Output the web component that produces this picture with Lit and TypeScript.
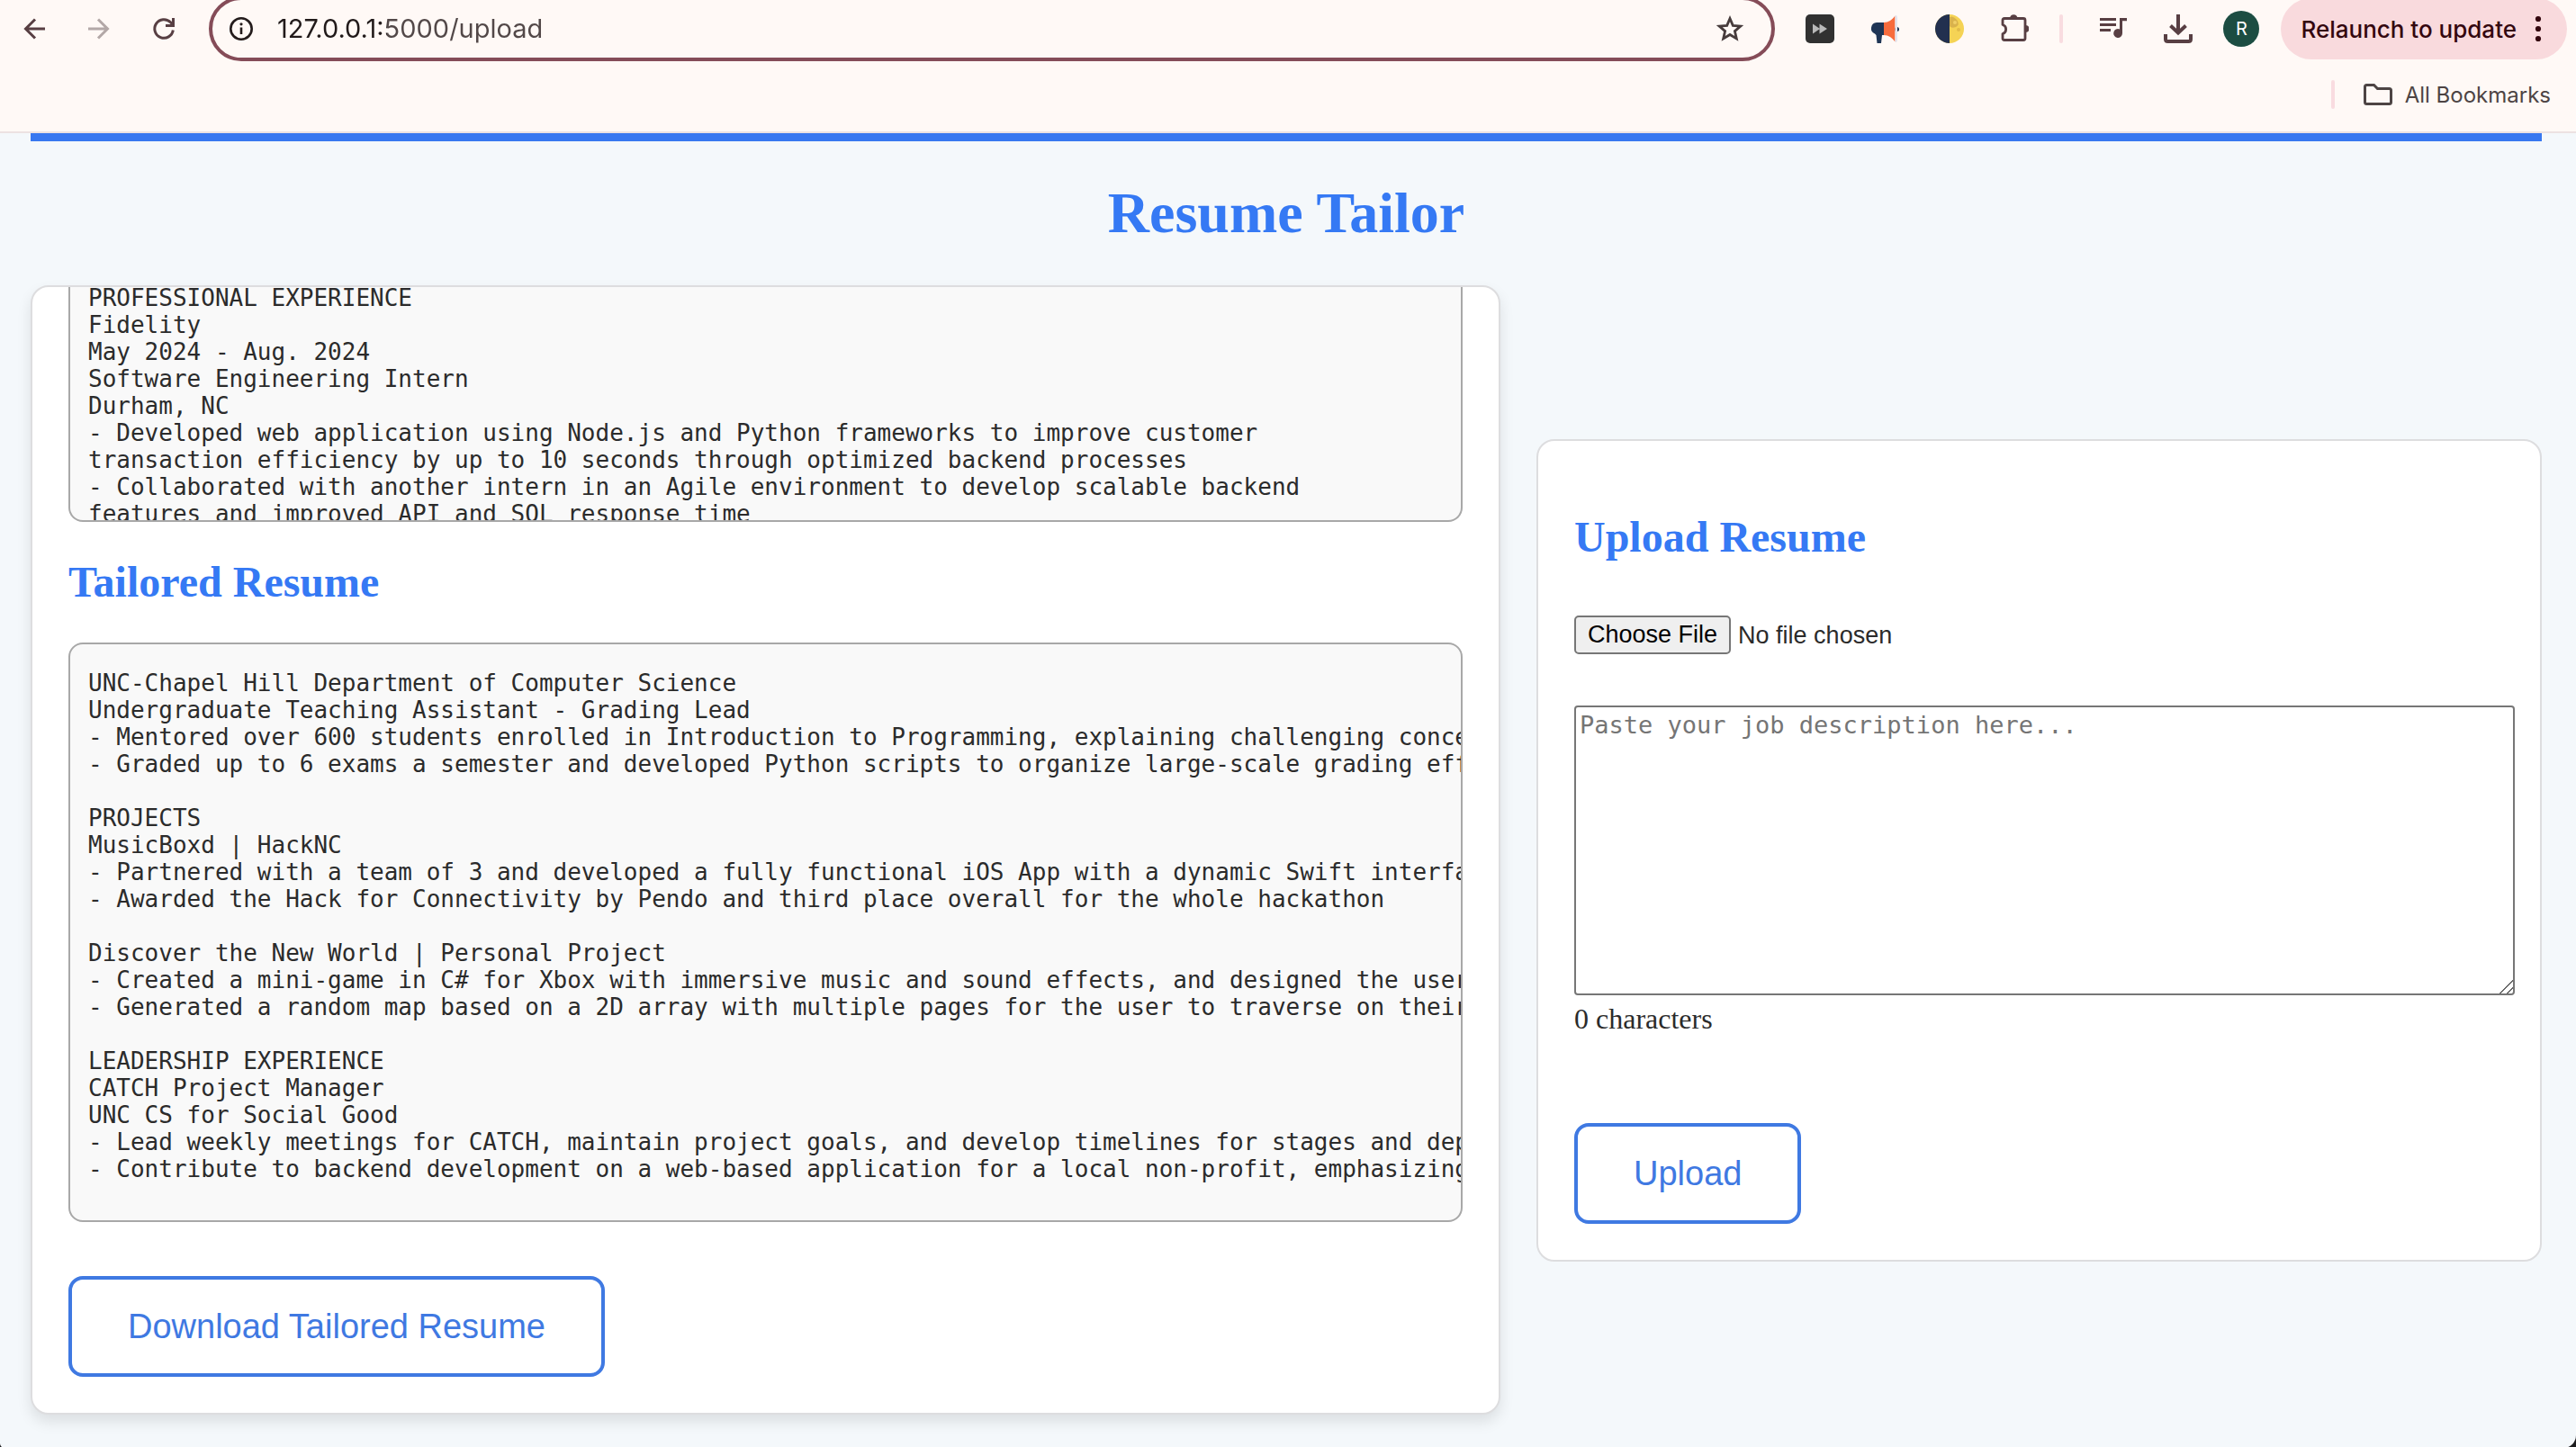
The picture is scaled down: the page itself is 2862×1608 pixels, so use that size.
import { LitElement, html, css } from "lit";
import { customElement, state } from "lit/decorators.js";

const ORIGINAL_LINES = [
  "PROFESSIONAL EXPERIENCE",
  "Fidelity",
  "May 2024 - Aug. 2024",
  "Software Engineering Intern",
  "Durham, NC",
  "- Developed web application using Node.js and Python frameworks to improve customer",
  "transaction efficiency by up to 10 seconds through optimized backend processes",
  "- Collaborated with another intern in an Agile environment to develop scalable backend",
  "features and improved API and SQL response time",
].join("\n");

const TAILORED_LINES = [
  "UNC-Chapel Hill Department of Computer Science",
  "Undergraduate Teaching Assistant - Grading Lead",
  "- Mentored over 600 students enrolled in Introduction to Programming, explaining challenging conce",
  "- Graded up to 6 exams a semester and developed Python scripts to organize large-scale grading eff",
  "",
  "PROJECTS",
  "MusicBoxd | HackNC",
  "- Partnered with a team of 3 and developed a fully functional iOS App with a dynamic Swift interfa",
  "- Awarded the Hack for Connectivity by Pendo and third place overall for the whole hackathon",
  "",
  "Discover the New World | Personal Project",
  "- Created a mini-game in C# for Xbox with immersive music and sound effects, and designed the user",
  "- Generated a random map based on a 2D array with multiple pages for the user to traverse on their",
  "",
  "LEADERSHIP EXPERIENCE",
  "CATCH Project Manager",
  "UNC CS for Social Good",
  "- Lead weekly meetings for CATCH, maintain project goals, and develop timelines for stages and dep",
  "- Contribute to backend development on a web-based application for a local non-profit, emphasizing",
].join("\n");

@customElement("browser-bar")
export class BrowserBar extends LitElement {
  static styles = css`
    :host {
      display: block;
      overflow: hidden;
      background: #fff9f6;
      border-bottom: 2px solid #ece2e2;
      font-family: Inter, "Liberation Sans", sans-serif;
      color: #583f43;
    }
    button {
      display: flex;
      padding: 0;
      border: 0;
      background: none;
      color: inherit;
      font: inherit;
    }
    svg {
      display: block;
      flex: none;
    }
    .toolbar {
      display: flex;
      align-items: center;
      height: 64px;
      gap: 34px;
      padding: 0 10px 0 22px;
    }
    .group {
      display: flex;
      align-items: center;
      gap: 40px;
    }
    .muted {
      color: #b3a8a7;
    }
    .omnibox {
      box-sizing: border-box;
      flex: 1;
      min-width: 0;
      display: flex;
      align-items: center;
      height: 72px;
      padding: 0 30px 0 16px;
      border: 4px solid #854c58;
      border-radius: 36px;
      color: #473c3c;
    }
    .info {
      color: #241c1c;
    }
    .url {
      flex: 1;
      min-width: 0;
      margin: 0 24px;
      padding: 0;
      border: 0;
      outline: 0;
      font: 29px/40px Inter, "Liberation Sans", sans-serif;
      color: transparent;
      background: linear-gradient(90deg, #211a1a 122px, #524848 122px);
      -webkit-background-clip: text;
      background-clip: text;
    }
    .divider {
      width: 4px;
      height: 32px;
      border-radius: 2px;
      background: #f9dce0;
    }
    .avatar {
      align-items: center;
      justify-content: center;
      width: 40px;
      height: 40px;
      border-radius: 50%;
      background: #1c4d42;
      color: #fff;
      font-size: 20px;
    }
    .profile {
      display: flex;
      align-items: center;
      gap: 24px;
    }
    .relaunch {
      align-items: center;
      gap: 20px;
      height: 68px;
      padding: 0 28px 0 22px;
      border-radius: 34px;
      background: #f9dadd;
      color: #34070f;
      font-size: 26px;
      font-weight: 450;
      white-space: nowrap;
    }
    .bookmarks {
      display: flex;
      align-items: center;
      justify-content: flex-end;
      height: 82px;
      gap: 32px;
      padding-right: 28px;
    }
    .folder {
      align-items: center;
      gap: 14px;
      color: #4d4444;
      font-size: 24px;
    }
  `;

  render() {
    return html`
      <div class="toolbar">
        <div class="group">
          <button aria-label="Back">
            <svg width="32" height="32" viewBox="0 0 32 32" fill="none" stroke="currentColor" stroke-width="3">
              <path d="M28 16H7M17 5.5L6.500 16L17 26.500" />
            </svg>
          </button>
          <button class="muted" aria-label="Forward">
            <svg width="32" height="32" viewBox="0 0 32 32" fill="none" stroke="currentColor" stroke-width="3">
              <path d="M4 16H25M15 5.500L25.500 16L15 26.500" />
            </svg>
          </button>
          <button aria-label="Reload">
            <svg width="32" height="32" viewBox="0 0 32 32" fill="none" stroke="currentColor" stroke-width="3">
              <path d="M26.300 17.500A10.300 10.300 0 1 1 23.500 8.800L26 11.500" />
              <path d="M26.500 4V12.500H18" />
            </svg>
          </button>
        </div>
        <div class="omnibox">
          <button class="info" aria-label="Site information">
            <svg width="32" height="32" viewBox="0 0 32 32" fill="none" stroke="currentColor" stroke-width="2.600">
              <circle cx="16" cy="16" r="11.700" />
              <path d="M16 14.500V22" />
              <circle cx="16" cy="10.800" r="1.600" fill="currentColor" stroke="none" />
            </svg>
          </button>
          <input class="url" type="text" aria-label="Address" value="127.0.0.1:5000/upload" />
          <button aria-label="Bookmark this tab">
            <svg width="32" height="32" viewBox="0 0 32 32" fill="none" stroke="currentColor" stroke-width="2.800">
              <path d="M16 4.500L19.300 12.300L27.800 13L21.400 18.600L23.300 26.900L16 22.500L8.700 26.900L10.600 18.600L4.200 13L12.700 12.300Z" />
            </svg>
          </button>
        </div>
        <div class="group">
          <button aria-label="Playback speed extension">
            <svg width="32" height="32" viewBox="0 0 32 32">
              <rect width="32" height="32" rx="5" fill="#313131" />
              <path d="M8 10.500L16 16L8 21.500ZM15.500 10.500L24 16L15.500 21.500Z" fill="#b9b9b9" />
            </svg>
          </button>
          <button aria-label="Megaphone extension">
            <svg width="32" height="32" viewBox="0 0 32 32">
              <circle cx="29.500" cy="16.500" r="2.500" fill="#1f3555" />
              <path d="M15 9H7A6.500 6.500 0 0 0 5 21.500L6.500 23L7.500 32H12L13 23H15Z" fill="#1f3555" />
              <path d="M15 9C20 9 24.500 6 27.500 1.500V30.500C24.500 26 20 23 15 23Z" fill="#f76b3c" />
              <path d="M27.500 1.500Q30 0 30 4V28Q30 32 27.500 30.500Z" fill="#e2e4ee" />
            </svg>
          </button>
          <button aria-label="Dark mode extension">
            <svg width="32" height="32" viewBox="0 0 32 32">
              <circle cx="16" cy="16" r="16" fill="#f5d355" />
              <path d="M16 0A16 16 0 0 0 16 32Z" fill="#22304f" />
              <path d="M16 3Q20 1 24 6Q28 11 23 14Q18 16 16 13Z" fill="#d9b24c" />
              <circle cx="22" cy="9" r="2" fill="#f0cf68" />
              <circle cx="26" cy="17" r="2" fill="#e2bb4a" />
            </svg>
          </button>
          <button aria-label="Extensions">
            <svg width="32" height="32" viewBox="0 0 32 32">
              <path d="M5 4.500H26Q28 4.500 28 6.500V26.500Q28 28.500 26 28.500H5Q3 28.500 3 26.500V21.500A5 5.200 0 0 0 3 11.500V6.500Q3 4.500 5 4.500Z"
                fill="none" stroke="currentColor" stroke-width="2.800" stroke-linejoin="round" />
              <path d="M11 4A4.300 4.500 0 0 1 19.500 4ZM28.500 12A4 4 0 0 1 28.500 20Z" fill="currentColor" />
            </svg>
          </button>
        </div>
        <div class="group">
          <span class="divider"></span>
          <button aria-label="Media controls">
            <svg width="32" height="32" viewBox="0 0 32 32" fill="currentColor">
              <path d="M1 4H19V7H1ZM1 10H19V13H1ZM1 16H13V19H1Z" />
              <path d="M23 4H31V7.200H26V21A4.900 4.900 0 1 1 23 16.500Z" />
            </svg>
          </button>
          <button aria-label="Downloads">
            <svg width="32" height="32" viewBox="0 0 32 32" fill="none" stroke="currentColor" stroke-width="4">
              <path d="M16 0V20M7.500 12.500L16 20.500L24.500 12.500" />
              <path d="M2 22V27.500Q2 30 4.500 30H27.500Q30 30 30 27.500V22" />
            </svg>
          </button>
        </div>
        <div class="profile">
          <button class="avatar" aria-label="Profile">R</button>
          <button class="relaunch">
            <span>Relaunch to update</span>
            <svg width="8" height="32" viewBox="0 0 8 32" fill="currentColor">
              <circle cx="4" cy="5" r="3.100" />
              <circle cx="4" cy="16" r="3.100" />
              <circle cx="4" cy="27" r="3.100" />
            </svg>
          </button>
        </div>
      </div>
      <div class="bookmarks">
        <span class="divider"></span>
        <button class="folder">
          <svg width="32" height="32" viewBox="0 0 32 32" fill="none" stroke="currentColor" stroke-width="3">
            <path d="M3.500 5.500H11.500L15.500 9.500H28.500Q30.500 9.500 30.500 11.500V24.500Q30.500 26.500 28.500 26.500H3.500Q1.500 26.500 1.500 24.500V7.500Q1.500 5.500 3.500 5.500Z" />
          </svg>
          All Bookmarks
        </button>
      </div>
    `;
  }
}

@customElement("app-root")
export class AppRoot extends LitElement {
  @state() private description = "";

  static styles = css`
    :host {
      display: block;
      min-height: 100vh;
      background: #1c1c1e;
      color: #2b2b2b;
      font-family: "Liberation Serif", "Times New Roman", serif;
    }
    .window {
      box-sizing: border-box;
      min-height: 100vh;
      overflow: hidden;
      border-radius: 0 0 14px 5px;
      background: #f4f8fb;
    }
    .page {
      padding: 0 38px 37px 34px;
    }
    .title {
      margin: 0;
      padding: 44px 0;
      border-top: 9px solid #3878f0;
      font-size: 64px;
      line-height: 72px;
      text-align: center;
      color: #3579f4;
    }
    .columns {
      display: grid;
      grid-template-columns: minmax(0, 1633fr) minmax(0, 1117fr);
      align-items: center;
      gap: 40px;
    }
    .card {
      border: 2px solid #dddddf;
      border-radius: 20px;
      background: #fff;
    }
    .results {
      overflow: hidden;
      padding: 0 40px;
      box-shadow: 0 8px 16px rgba(0, 0, 0, 0.1);
    }
    .upload {
      padding: 0 40px 40px;
    }
    .heading {
      margin: 40px 0;
      font-size: 48px;
      line-height: 54px;
      color: #3579f4;
    }
    .upload .heading {
      margin: 80px 0 60px;
    }
    .resume {
      box-sizing: border-box;
      margin: 0;
      overflow: hidden;
      border: 2px solid #a8a8a8;
      border-radius: 16px;
      background: #f9f9f9;
      padding: 28px 20px 42px;
      font-family: "DejaVu Sans Mono", "Liberation Mono", monospace;
      font-size: 26px;
      line-height: 30px;
    }
    .original {
      height: 264px;
      margin-top: -3px;
      padding: 0 20px;
      border-top: 0;
      border-radius: 0 0 16px 16px;
    }
    .action {
      display: block;
      box-sizing: border-box;
      height: 112px;
      padding: 0 62px;
      border: 4px solid #3f79e2;
      border-radius: 16px;
      background: #fff;
      color: #3f79e2;
      font: 38px/44px "Liberation Sans", Arial, sans-serif;
    }
    .results .action {
      margin: 60px 0 40px;
    }
    .file {
      display: block;
      height: 43px;
      font: 27px/32px "Liberation Sans", Arial, sans-serif;
    }
    .file::file-selector-button {
      box-sizing: border-box;
      height: 43px;
      margin: 0 8px 0 0;
      padding: 0 13px;
      border: 2px solid #767676;
      border-radius: 5px;
      background: #efefef;
      color: #000;
      font: inherit;
    }
    .description {
      display: block;
      width: 100%;
      height: 310px;
      margin: 57px 0 8px;
      padding: 4px;
      border: 2px solid #767676;
      border-radius: 4px;
      background: #fff;
      color: #2b2b2b;
      font: 27px/31px "DejaVu Sans Mono", "Liberation Mono", monospace;
      resize: both;
    }
    .description::placeholder {
      color: #757575;
    }
    .description::-webkit-resizer {
      background: linear-gradient(
        135deg,
        transparent 47%,
        #666 49%,
        #666 54%,
        transparent 56%,
        transparent 74%,
        #666 76%,
        #666 81%,
        transparent 83%
      );
    }
    .count {
      margin: 0 0 98px;
      font-size: 32px;
      line-height: 36px;
    }
  `;

  private onInput(event: Event) {
    this.description = (event.target as HTMLTextAreaElement).value;
  }

  render() {
    return html`
      <div class="window">
        <browser-bar></browser-bar>
        <main class="page">
          <h1 class="title">Resume Tailor</h1>
          <div class="columns">
            <section class="card results">
              <pre class="resume original">${ORIGINAL_LINES}</pre>
              <h2 class="heading">Tailored Resume</h2>
              <pre class="resume">${TAILORED_LINES}</pre>
              <button class="action">Download Tailored Resume</button>
            </section>
            <form class="card upload" @submit=${(event: Event) => event.preventDefault()}>
              <h2 class="heading" id="upload-heading">Upload Resume</h2>
              <input class="file" type="file" aria-labelledby="upload-heading" />
              <textarea
                class="description"
                aria-label="Job description"
                placeholder="Paste your job description here..."
                @input=${this.onInput}
              ></textarea>
              <p class="count">${this.description.length} characters</p>
              <button class="action" type="submit">Upload</button>
            </form>
          </div>
        </main>
      </div>
    `;
  }
}
